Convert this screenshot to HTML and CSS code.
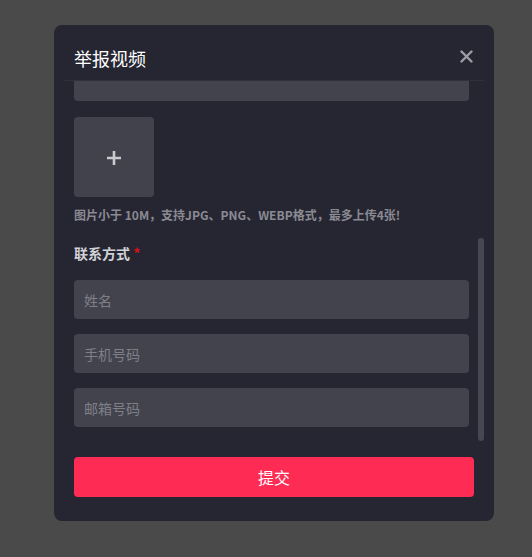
FILE: index.html
```html
<!DOCTYPE html>
<html lang="zh">

<head>
  <meta charset="UTF-8">
  <meta name="viewport" content="width=device-width, initial-scale=1.0">
  <title>举报视频</title>
  <link rel="stylesheet" href="styles.css">
</head>

<body>
  <div class="overlay">
    <div class="modal">
      <div class="modal-header">
        <div class="modal-title">举报视频</div>
        <button class="close-btn" type="button" aria-label="关闭">
          <svg width="13" height="13" viewBox="0 0 13 13">
            <path d="M1.5 1.5 L11.5 11.5 M11.5 1.5 L1.5 11.5" stroke="currentColor" stroke-width="2.4" stroke-linecap="round" fill="none" />
          </svg>
        </button>
      </div>

      <!-- 可滚动的表单区域，滚动条用自绘的滑块 -->
      <div class="body-wrap">
        <div class="modal-body" id="modalBody">
          <div class="field">
            <div class="field-label">举报类型 <span class="required">*</span></div>
            <div class="select">请选择举报类型</div>
          </div>

          <div class="field">
            <div class="field-label">问题描述 <span class="required">*</span></div>
            <textarea class="textarea" placeholder="请详细描述问题"></textarea>
          </div>

          <div class="upload">
            <svg width="16" height="16" viewBox="0 0 16 16">
              <path d="M8 1 V15 M1 8 H15" stroke="currentColor" stroke-width="2.6" fill="none" />
            </svg>
          </div>
          <div class="hint">图片小于 10M，支持JPG、PNG、WEBP格式，最多上传4张!</div>

          <div class="field contact">
            <div class="field-label">联系方式 <span class="required">*</span></div>
            <input class="input" type="text" placeholder="姓名">
            <input class="input" type="text" placeholder="手机号码">
            <input class="input" type="text" placeholder="邮箱号码">
          </div>
        </div>
        <div class="scroll-thumb"></div>
      </div>

      <div class="modal-footer">
        <button class="submit-btn" type="button">提交</button>
      </div>
    </div>
  </div>
  <script src="script.js"></script>
</body>

</html>
```

FILE: styles.css
```css
body {
  margin: 0;
  background: #4a4a4a;
  font-family: "Noto Sans CJK SC", "Liberation Sans", sans-serif;
}

.overlay {
  display: flex;
  align-items: flex-start;
  padding: 25px 0 0 54px;
  height: 557px;
  box-sizing: border-box;
}

.modal {
  width: 440px;
  background: #262632;
  border-radius: 8px;
  display: flex;
  flex-direction: column;
}

/* 标题栏 */
.modal-header {
  display: flex;
  justify-content: space-between;
  align-items: flex-start;
  margin: 0 10px;
  padding: 20px 10px 9px;
  border-bottom: 1px solid #31313c;
}

.modal-title {
  color: #ffffff;
  font-size: 18px;
  line-height: 26px;
}

.close-btn {
  width: 16px;
  height: 16px;
  margin-top: 3px;
  padding: 0;
  border: none;
  background: transparent;
  color: #9d9da6;
  display: flex;
  align-items: center;
  justify-content: center;
  cursor: pointer;
}

/* 表单滚动区 */
.body-wrap {
  position: relative;
  margin: 0 10px;
}

.modal-body {
  height: 360px;
  padding: 16px 15px 14px 10px;
  box-sizing: border-box;
  overflow: hidden;
}

.scroll-thumb {
  position: absolute;
  right: 0;
  bottom: 0;
  width: 6px;
  height: 203px;
  border-radius: 3px;
  background: #474753;
}

.field+.field {
  margin-top: 19px;
}

.field-label {
  color: #d2d2d8;
  font-size: 14px;
  font-weight: 700;
  line-height: 20px;
  margin-bottom: 16px;
}

.required {
  color: #d9101a;
}

.select,
.input,
.textarea {
  display: block;
  width: 100%;
  height: 39px;
  box-sizing: border-box;
  border: none;
  border-radius: 4px;
  background: #43434e;
  color: #d2d2d8;
  font-family: inherit;
  font-size: 14px;
  padding: 0 10px;
  outline: none;
}

.select {
  display: flex;
  align-items: center;
  color: #7f7f88;
}

.textarea {
  height: 151px;
  padding: 10px;
  resize: none;
}

.input+.input {
  margin-top: 15px;
}

.input::placeholder,
.textarea::placeholder {
  color: #7f7f88;
}

/* 上传图片 */
.upload {
  width: 80px;
  height: 80px;
  margin-top: 16px;
  border-radius: 4px;
  background: #42424d;
  color: #c9c9ce;
  display: flex;
  align-items: center;
  justify-content: center;
  padding-top: 2px;
  box-sizing: border-box;
}

.hint {
  margin-top: 8px;
  color: #8a8a92;
  font-size: 12px;
  font-weight: 700;
  line-height: 20px;
}

.contact {
  margin-top: 18px;
}

.contact .field-label {
  margin-bottom: 17px;
}

/* 底部按钮 */
.modal-footer {
  padding: 16px 20px 24px;
}

.submit-btn {
  display: block;
  width: 100%;
  height: 40px;
  border: none;
  border-radius: 4px;
  background: #fe2c55;
  color: #ffffff;
  font-family: inherit;
  font-size: 16px;
  cursor: pointer;
}
```

FILE: script.js
```js
// 表单滚到最底部
var body = document.getElementById('modalBody');
body.scrollTop = body.scrollHeight;
```
